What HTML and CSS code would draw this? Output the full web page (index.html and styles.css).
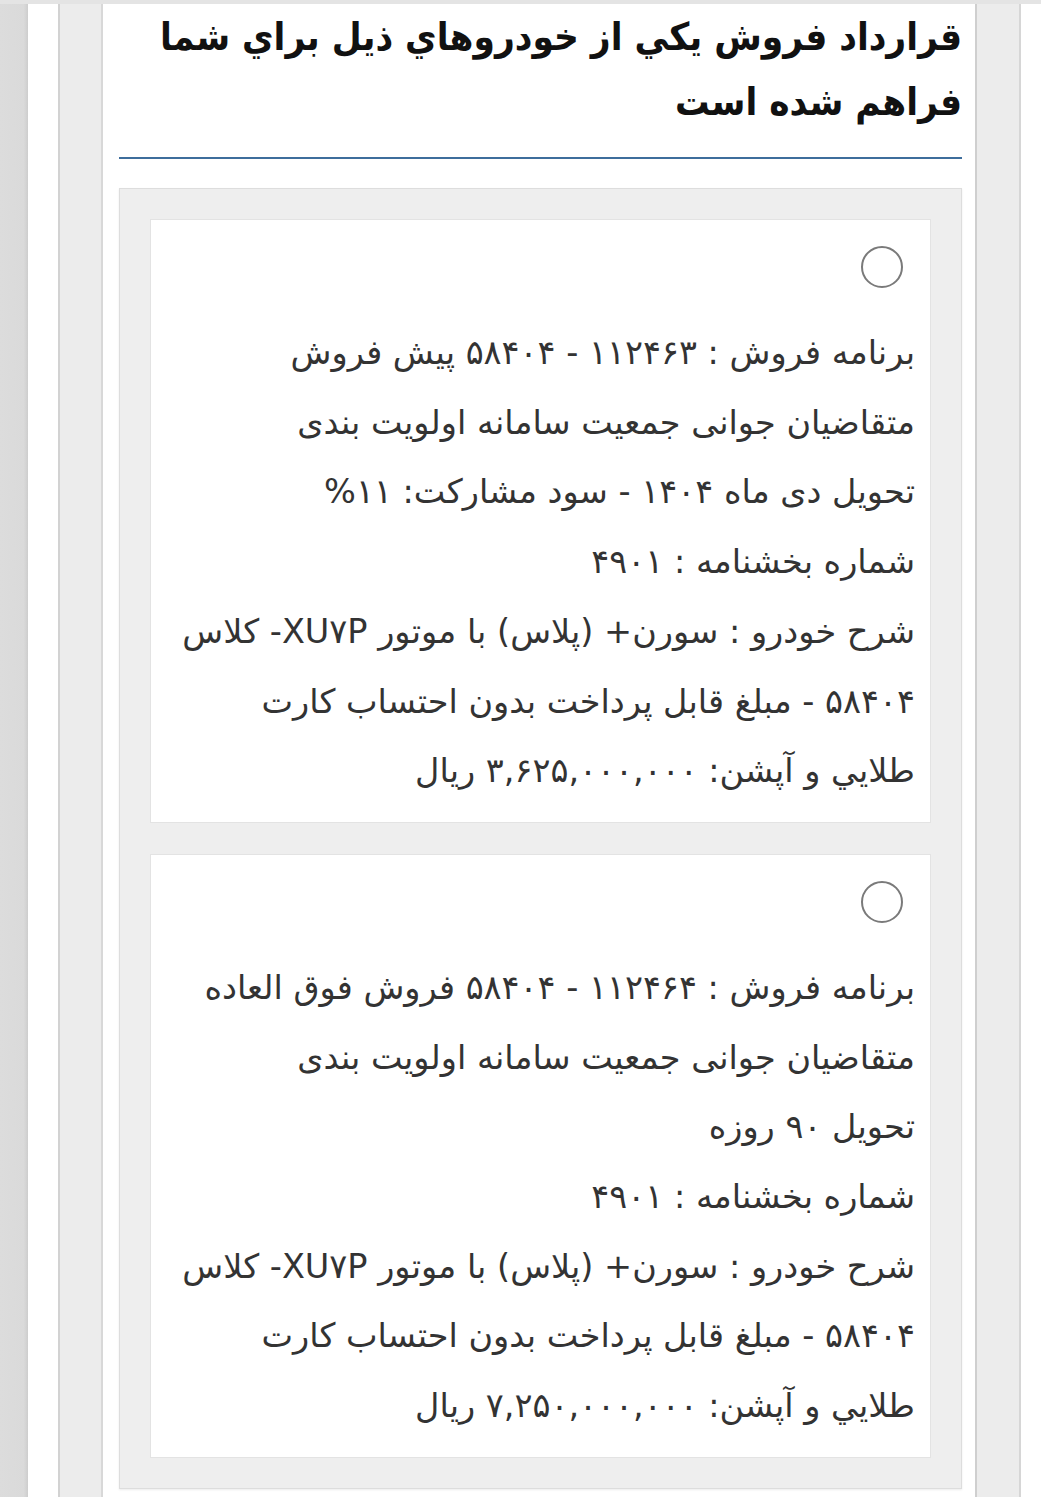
FILE: index.html
```html
<!DOCTYPE html>
<html lang="fa">
<head>
<meta charset="utf-8">
<title>قرارداد فروش</title>
<link rel="stylesheet" href="styles.css">
</head>
<body>
<div class="page">
  <div class="strip"></div>
  <div class="gap"></div>
  <div class="frame">
    <main class="content" dir="rtl">
      <h1 class="title">قرارداد فروش يكي از خودروهاي ذيل براي شما<br>فراهم شده است</h1>
      <hr class="rule">
      <div class="list">
        <label class="card">
          <input class="radio" type="radio" name="car">
          <p class="info">برنامه فروش : ۱۱۲۴۶۳ - ۵۸۴۰۴ پیش فروش<br>متقاضیان جوانی جمعیت سامانه اولویت بندی<br>تحویل دی ماه ۱۴۰۴ - سود مشارکت: ۱۱%<br>شماره بخشنامه : ۴۹۰۱<br>شرح خودرو : سورن+ (پلاس) با موتور XU۷P- کلاس<br>۵۸۴۰۴ - مبلغ قابل پرداخت بدون احتساب کارت<br>طلايي و آپشن: ۳,۶۲۵,۰۰۰,۰۰۰ ريال</p>
        </label>
        <label class="card">
          <input class="radio" type="radio" name="car">
          <p class="info">برنامه فروش : ۱۱۲۴۶۴ - ۵۸۴۰۴ فروش فوق العاده<br>متقاضیان جوانی جمعیت سامانه اولویت بندی<br>تحویل ۹۰ روزه<br>شماره بخشنامه : ۴۹۰۱<br>شرح خودرو : سورن+ (پلاس) با موتور XU۷P- کلاس<br>۵۸۴۰۴ - مبلغ قابل پرداخت بدون احتساب کارت<br>طلايي و آپشن: ۷,۲۵۰,۰۰۰,۰۰۰ ريال</p>
        </label>
      </div>
    </main>
  </div>
  <div class="edge"></div>
</div>
</body>
</html>
```

FILE: styles.css
```css
html, body {
  margin: 0;
  padding: 0;
  background: #ffffff;
}
body {
  border-top: 4px solid #e4e4e4;
  font-family: "DejaVu Sans", "Noto Sans", sans-serif;
}
.page {
  display: flex;
  min-height: 1493px;
}
.strip {
  width: 28px;
  flex: none;
  background: linear-gradient(to right, #dcdcdc, #dadada 85%, #cdcdcd);
}
.gap {
  width: 30px;
  flex: none;
  background: #ffffff;
}
.frame {
  flex: 1;
  min-width: 0;
  display: flex;
  background: #ececec;
  border-left: 2px solid #d2d2d2;
  border-right: 2px solid #d6d6d6;
  padding: 0 42px 0 41px;
}
.content {
  flex: 1;
  min-width: 0;
  background: #ffffff;
  border-left: 2px solid #d8d8d8;
  border-right: 2px solid #cfcfcf;
  padding: 0 13px 0 16px;
}
.edge {
  width: 20px;
  flex: none;
}
.title {
  margin: 0;
  font-family: "DejaVu Sans Condensed", "DejaVu Sans", sans-serif;
  font-weight: bold;
  font-size: 38.3px;
  line-height: 65px;
  color: #111111;
  text-align: right;
}
.rule {
  margin: 23px 0 0;
  border: 0;
  height: 2px;
  background: #3d6d9c;
}
.list {
  margin-top: 29px;
  background: #eeeeee;
  border: 1px solid #dddddd;
  box-shadow: 0 1px 2px rgba(0, 0, 0, 0.08);
  padding: 30px;
  display: flex;
  flex-direction: column;
  gap: 31px;
}
.card {
  display: flex;
  flex-direction: column;
  align-items: flex-start;
  min-width: 0;
  background: #ffffff;
  border: 1px solid #e3e3e3;
  padding: 26px 15px 16px 16px;
}
.radio {
  appearance: none;
  -webkit-appearance: none;
  margin: 0 12px 0 0;
  width: 42px;
  height: 42px;
  border: 2.5px solid #7a7a7a;
  border-radius: 50%;
  background: #ffffff;
  box-sizing: border-box;
}
.info {
  margin: 30px 0 0;
  font-size: 33.5px;
  line-height: 69.7px;
  color: #333333;
  text-align: right;
  align-self: stretch;
  white-space: nowrap;
}
```
